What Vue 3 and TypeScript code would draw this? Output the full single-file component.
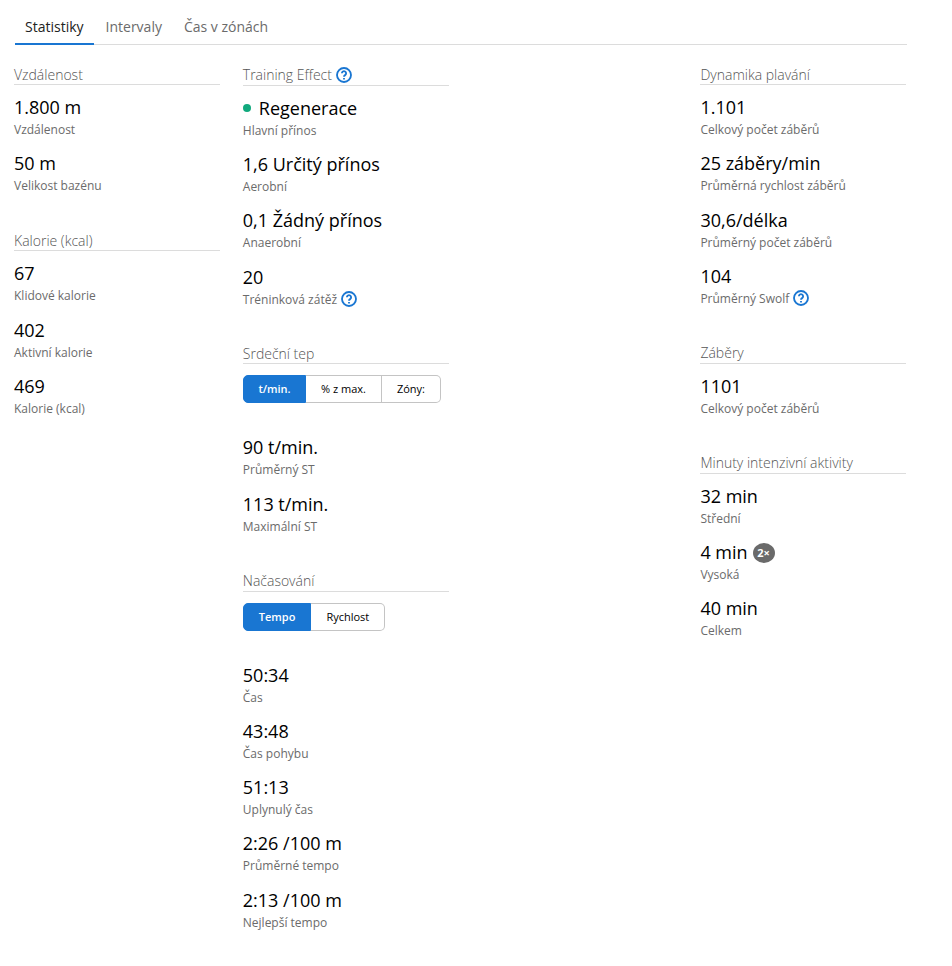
<script setup lang="ts">
import { ref } from 'vue'

interface Stat {
  value: string
  label: string
  dot?: boolean
  help?: boolean
  badge?: string
}

interface Section {
  title: string
  help?: boolean
  toggle?: string[]
  stats: Stat[]
}

const tabs = ['Statistiky', 'Intervaly', 'Čas v zónách']
const activeTab = ref(0)
const selected = ref<Record<string, number>>({})

const columns: Section[][] = [
  [
    {
      title: 'Vzdálenost',
      stats: [
        { value: '1.800 m', label: 'Vzdálenost' },
        { value: '50 m', label: 'Velikost bazénu' },
      ],
    },
    {
      title: 'Kalorie (kcal)',
      stats: [
        { value: '67', label: 'Klidové kalorie' },
        { value: '402', label: 'Aktivní kalorie' },
        { value: '469', label: 'Kalorie (kcal)' },
      ],
    },
  ],
  [
    {
      title: 'Training Effect',
      help: true,
      stats: [
        { value: 'Regenerace', label: 'Hlavní přínos', dot: true },
        { value: '1,6 Určitý přínos', label: 'Aerobní' },
        { value: '0,1 Žádný přínos', label: 'Anaerobní' },
        { value: '20', label: 'Tréninková zátěž', help: true },
      ],
    },
    {
      title: 'Srdeční tep',
      toggle: ['t/min.', '% z max.', 'Zóny:'],
      stats: [
        { value: '90 t/min.', label: 'Průměrný ST' },
        { value: '113 t/min.', label: 'Maximální ST' },
      ],
    },
    {
      title: 'Načasování',
      toggle: ['Tempo', 'Rychlost'],
      stats: [
        { value: '50:34', label: 'Čas' },
        { value: '43:48', label: 'Čas pohybu' },
        { value: '51:13', label: 'Uplynulý čas' },
        { value: '2:26 /100 m', label: 'Průměrné tempo' },
        { value: '2:13 /100 m', label: 'Nejlepší tempo' },
      ],
    },
  ],
  [],
  [
    {
      title: 'Dynamika plavání',
      stats: [
        { value: '1.101', label: 'Celkový počet záběrů' },
        { value: '25 záběry/min', label: 'Průměrná rychlost záběrů' },
        { value: '30,6/délka', label: 'Průměrný počet záběrů' },
        { value: '104', label: 'Průměrný Swolf', help: true },
      ],
    },
    {
      title: 'Záběry',
      stats: [{ value: '1101', label: 'Celkový počet záběrů' }],
    },
    {
      title: 'Minuty intenzivní aktivity',
      stats: [
        { value: '32 min', label: 'Střední' },
        { value: '4 min', label: 'Vysoká', badge: '2×' },
        { value: '40 min', label: 'Celkem' },
      ],
    },
  ],
]
</script>

<template>
  <main class="page">
    <nav class="tabs">
      <button
        v-for="(tab, i) in tabs"
        :key="tab"
        class="tab"
        :class="{ active: i === activeTab }"
        @click="activeTab = i"
      >{{ tab }}</button>
    </nav>

    <div class="columns">
      <div v-for="(column, c) in columns" :key="c" class="column">
        <section
          v-for="section in column"
          :key="section.title"
          class="section"
          :class="{ tall: section.help }"
        >
          <h4 class="heading">
            <span class="title">{{ section.title }}</span>
            <svg v-if="section.help" class="help" viewBox="0 0 16 16">
              <circle cx="8" cy="8" r="7" />
              <path d="M5.9 6.3a2.1 2.1 0 1 1 3.2 1.8C8.3 8.6 8 8.9 8 9.7" />
              <path d="M8 11.1v1.3" />
            </svg>
          </h4>
          <div v-if="section.toggle" class="toggle" :class="{ pair: section.toggle.length === 2 }">
            <button
              v-for="(option, i) in section.toggle"
              :key="option"
              class="option"
              :class="{ on: i === (selected[section.title] ?? 0) }"
              @click="selected[section.title] = i"
            >{{ option }}</button>
          </div>
          <div v-for="stat in section.stats" :key="stat.label" class="stat">
            <div class="value">
              <i v-if="stat.dot" class="dot"></i>
              <span>{{ stat.value }}</span>
              <b v-if="stat.badge" class="badge">{{ stat.badge }}</b>
            </div>
            <div class="label">
              <span>{{ stat.label }}</span>
              <svg v-if="stat.help" class="help" viewBox="0 0 16 16">
                <circle cx="8" cy="8" r="7" />
                <path d="M5.9 6.3a2.1 2.1 0 1 1 3.2 1.8C8.3 8.6 8 8.9 8 9.7" />
                <path d="M8 11.1v1.3" />
              </svg>
            </div>
          </div>
        </section>
      </div>
    </div>
  </main>
</template>

<style>
body {
  background: #fff;
}
</style>

<style scoped>
.page {
  box-sizing: border-box;
  width: 952px;
  height: 966px;
  padding: 10px 45px 0 14px;
  overflow: hidden;
  font-family: 'Open Sans', 'Noto Sans', sans-serif;
  color: #000;
}

button {
  margin: 0;
  border: 0;
  background: none;
  font-family: inherit;
  white-space: nowrap;
}

.tabs {
  display: flex;
  height: 34px;
  margin-left: 1px;
  border-bottom: 1px solid #dcdcdc;
}

.tab {
  box-sizing: border-box;
  height: 35px;
  padding: 0 11px;
  border-bottom: 2px solid transparent;
  font-size: 14px;
  line-height: 33px;
  color: #6b6b6b;
}

.tab.active {
  margin-right: 1px;
  padding: 0 10px;
  border-bottom-color: #1976d2;
  color: #222;
}

.columns {
  display: grid;
  grid-template-columns: repeat(4, 206px);
  column-gap: 22.8px;
  padding-top: 20px;
}

.section {
  padding-bottom: 24.75px;
}

.section.tall {
  padding-bottom: 24.5px;
}

.heading {
  display: flex;
  gap: 4px;
  height: 19px;
  margin: 0 0 9px;
  border-bottom: 1px solid #dcdcdc;
  font-size: 14px;
  font-weight: 300;
  line-height: 19px;
  color: #555;
}

.title {
  margin-top: -0.4px;
}

.tall .heading {
  height: 19.8px;
}

.help {
  flex: none;
  width: 16px;
  height: 16px;
  margin-top: 2px;
  fill: none;
  stroke: #1976d2;
  stroke-width: 1.85;
}

.toggle {
  display: flex;
  width: max-content;
  margin: 11px 0 31px;
}

.option {
  box-sizing: border-box;
  height: 28px;
  padding: 0 15px;
  border: 1px solid #c4c4c4;
  border-left-width: 0;
  font-size: 11px;
  line-height: 26px;
  color: #000;
}

.option.on {
  padding: 0 14.4px 0 14.6px;
  border-color: #1976d2;
  background: #1976d2;
  font-weight: 600;
  color: #fff;
}

.pair .option.on {
  padding: 0 15px;
}

.option:first-child {
  border-left-width: 1px;
  border-radius: 5px 0 0 5px;
}

.option:last-child {
  border-radius: 0 5px 5px 0;
}

.stat {
  padding-bottom: 11.25px;
}

.value {
  display: flex;
  align-items: center;
  height: 27px;
  font-size: 18px;
  line-height: 27px;
  white-space: nowrap;
}

.dot {
  width: 8px;
  height: 8px;
  margin: 0 8px 1px 0;
  border-radius: 50%;
  background: #11a97d;
}

.badge {
  width: 22px;
  height: 20px;
  margin-left: 5px;
  border-radius: 50%;
  background: #6a6a6a;
  font-size: 11px;
  line-height: 20px;
  text-align: center;
  color: #fff;
}

.label {
  display: flex;
  gap: 3.6px;
  height: 18px;
  font-size: 12px;
  line-height: 18px;
  color: #6b6b6b;
  white-space: nowrap;
}

.label .help {
  margin-top: 0;
}
</style>
